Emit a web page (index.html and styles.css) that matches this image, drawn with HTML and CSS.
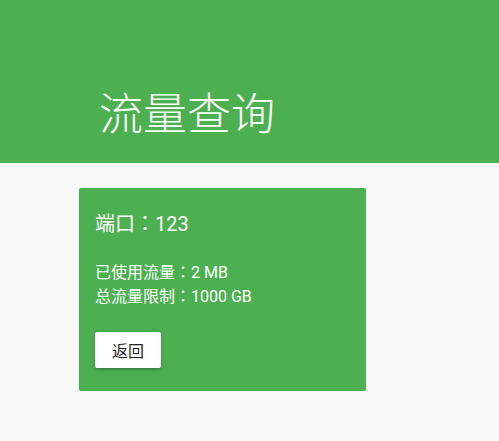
FILE: index.html
```html
<!DOCTYPE html>
<html lang="zh-CN">
<head>
    <meta charset="UTF-8">
    <meta name="viewport" content="width=device-width, initial-scale=1.0">
    <title>流量查询</title>
    <link rel="stylesheet" href="styles.css">
</head>
<body>
    <header class="header">
        <h1 class="title">流量查询</h1>
    </header>

    <main class="main">
        <div class="card">
            <h2 class="card-title">端口<span class="sep" lang="zh-TW">：</span><span id="port">123</span></h2>
            <div class="card-info">
                <p>已使用流量<span class="sep" lang="zh-TW">：</span><span id="used">2 MB</span></p>
                <p>总流量限制<span class="sep" lang="zh-TW">：</span><span id="limit">1000 GB</span></p>
            </div>
            <button class="btn" onclick="history.back()">返回</button>
        </div>
    </main>
</body>
</html>
```

FILE: styles.css
```css
* {
    box-sizing: border-box;
    margin: 0;
    padding: 0;
}

body {
    font-family: Roboto, "Noto Sans CJK SC", sans-serif;
    background-color: #fafafa;
    color: #fff;
}

.header {
    background-color: #4caf50;
    height: 163px;
    display: flex;
    align-items: center;
    padding-left: 99px;
    padding-top: 68px;
}

.title {
    font-size: 44px;
    font-weight: 300;
    line-height: 1.2;
}

.main {
    padding: 25px 0 0 79px;
}

.card {
    width: 287px;
    background-color: #4caf50;
    border-radius: 2px;
    padding: 20px 16px 23px;
    box-shadow: 0 1px 2px rgba(0, 0, 0, 0.12);
}

.card-title {
    font-size: 20px;
    font-weight: 400;
    line-height: 32px;
}

.card-info {
    margin-top: 21px;
    font-size: 16px;
    line-height: 24px;
}

.btn {
    margin-top: 23px;
    height: 36px;
    padding: 0 17px;
    border: none;
    border-radius: 2px;
    background-color: #fff;
    color: #222;
    font-family: Roboto, "Noto Sans CJK SC", sans-serif;
    font-size: 16px;
    cursor: pointer;
    box-shadow: 0 2px 2px rgba(0, 0, 0, 0.14), 0 1px 5px rgba(0, 0, 0, 0.12);
}
```
